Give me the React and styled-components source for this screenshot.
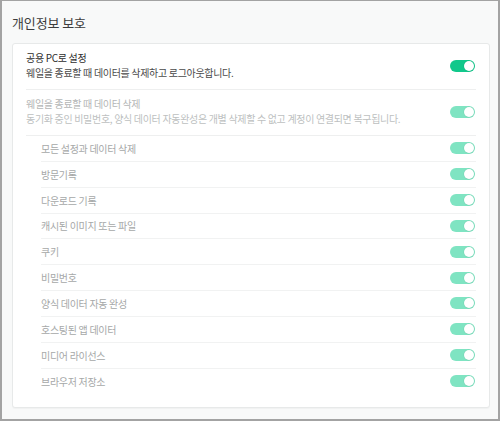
import React from "react";
import styled, { createGlobalStyle } from "styled-components";

const Global = createGlobalStyle`
  html, body { margin: 0; padding: 0; }
  body {
    font-family: "Noto Sans CJK KR", "Noto Sans", sans-serif;
    background: #ffffff;
  }
`;

const Frame = styled.div`
  box-sizing: border-box;
  width: 500px;
  height: 421px;
  border-style: solid;
  border-color: #a3a3a3;
  border-width: 1px 2px 2px 2px;
  background: #f8f9f9;
  padding: 0 9px 0 10px;
  display: flex;
  flex-direction: column;
  overflow: hidden;
`;

const Heading = styled.h1`
  margin: 0;
  height: 42px;
  display: flex;
  align-items: center;
  font-size: 13px;
  font-weight: 400;
  color: #3c3c3c;
  letter-spacing: -0.1px;
`;

const Card = styled.section`
  box-sizing: border-box;
  width: 478px;
  background: #ffffff;
  border: 1px solid #e7e9e9;
  border-radius: 3px;
  box-shadow: 0 1px 1px rgba(0, 0, 0, 0.03);
  padding: 0 13px 13px 13px;
`;

const Row = styled.div`
  display: flex;
  align-items: center;
  justify-content: space-between;
  border-bottom: 1px solid ${(p) => (p.$last ? "transparent" : "#eeefef")};
`;

const MainRow = styled(Row)`
  padding: 7px 0 9px 0;
`;

const SubList = styled.div`
  padding-left: 15px;
`;

const SubRow = styled(Row)`
  height: 24.85px;
  border-bottom-color: ${(p) => (p.$last ? "transparent" : "#f1f2f2")};
`;

const TextBlock = styled.div`
  display: flex;
  flex-direction: column;
  font-size: 10px;
  line-height: 14.5px;
  letter-spacing: -0.32px;
`;

const Title = styled.span`
  color: ${(p) => (p.$muted ? "#b4b6b6" : "#2d2d2d")};
`;

const Desc = styled.span`
  color: ${(p) => (p.$muted ? "#bdbfbf" : "#4a4a4a")};
`;

const SubLabel = styled.span`
  font-size: 10px;
  letter-spacing: -0.3px;
  color: #a6a8a8;
`;

const Toggle = styled.span`
  flex: none;
  box-sizing: border-box;
  width: 25px;
  height: 12px;
  border-radius: 6px;
  background: ${(p) => (p.$dim ? "#7fe4c2" : "#11c88b")};
  display: flex;
  align-items: center;
  justify-content: flex-end;
  padding-right: 1px;
  margin-right: 1px;
`;

const Knob = styled.span`
  width: 10px;
  height: 10px;
  border-radius: 50%;
  background: #ffffff;
  box-shadow: 0 0 0 0.5px rgba(0, 0, 0, 0.08);
`;

const subItems = [
  "모든 설정과 데이터 삭제",
  "방문기록",
  "다운로드 기록",
  "캐시된 이미지 또는 파일",
  "쿠키",
  "비밀번호",
  "양식 데이터 자동 완성",
  "호스팅된 앱 데이터",
  "미디어 라이선스",
  "브라우저 저장소",
];

function Switch({ dim }) {
  return (
    <Toggle $dim={dim}>
      <Knob />
    </Toggle>
  );
}

export default function App() {
  return (
    <>
      <Global />
      <Frame>
        <Heading>개인정보 보호</Heading>
        <Card>
          <MainRow>
            <TextBlock>
              <Title>공용 PC로 설정</Title>
              <Desc>웨일을 종료할 때 데이터를 삭제하고 로그아웃합니다.</Desc>
            </TextBlock>
            <Switch />
          </MainRow>
          <MainRow>
            <TextBlock>
              <Title $muted>웨일을 종료할 때 데이터 삭제</Title>
              <Desc $muted>
                동기화 중인 비밀번호, 양식 데이터 자동완성은 개별 삭제할 수 없고 계정이 연결되면 복구됩니다.
              </Desc>
            </TextBlock>
            <Switch dim />
          </MainRow>
          <SubList>
            {subItems.map((label, i) => (
              <SubRow key={label} $last={i === subItems.length - 1}>
                <SubLabel>{label}</SubLabel>
                <Switch dim />
              </SubRow>
            ))}
          </SubList>
        </Card>
      </Frame>
    </>
  );
}
